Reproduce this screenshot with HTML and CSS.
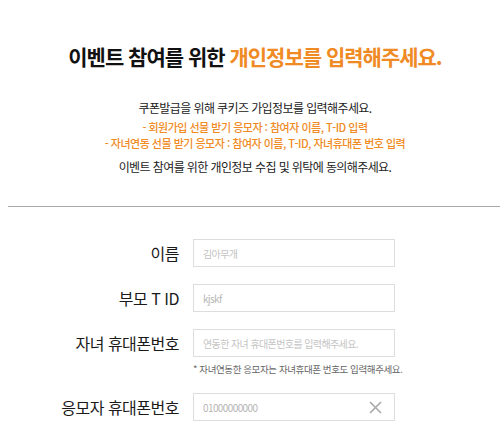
FILE: index.html
```html
<!DOCTYPE html>
<html lang="ko">
<head>
    <meta charset="UTF-8">
    <meta name="viewport" content="width=device-width, initial-scale=1.0">
    <title>이벤트 참여 개인정보 입력</title>
    <link rel="stylesheet" href="styles.css">
</head>
<body>
    <div class="intro">
        <h1>이벤트 참여를 위한 <span class="accent">개인정보를 입력해주세요.</span></h1>
        <p class="lead">쿠폰발급을 위해 쿠키즈 가입정보를 입력해주세요.</p>
        <p class="sub">- 회원가입 선물 받기 응모자 : 참여자 이름, T-ID 입력</p>
        <p class="sub">- 자녀연동 선물 받기 응모자 : 참여자 이름, T-ID, 자녀휴대폰 번호 입력</p>
        <p class="agree">이벤트 참여를 위한 개인정보 수집 및 위탁에 동의해주세요.</p>
    </div>

    <hr class="divider">

    <form class="info-form">
        <div class="field">
            <label for="name">이름</label>
            <div class="control">
                <input type="text" id="name" placeholder="김아무개">
            </div>
        </div>
        <div class="field">
            <label for="tid">부모 T ID</label>
            <div class="control">
                <input type="text" id="tid" value="kjskf">
            </div>
        </div>
        <div class="field">
            <label for="child">자녀 휴대폰번호</label>
            <div class="control">
                <input type="text" id="child" placeholder="연동한 자녀 휴대폰번호를 입력해주세요.">
                <p class="note">* 자녀연동한 응모자는 자녀휴대폰 번호도 입력해주세요.</p>
            </div>
        </div>
        <div class="field">
            <label for="phone">응모자 휴대폰번호</label>
            <div class="control">
                <input type="text" id="phone" value="01000000000">
                <button type="button" class="clear" aria-label="지우기">
                    <svg width="13" height="13" viewBox="0 0 13 13">
                        <path d="M1 1 L12 12 M12 1 L1 12" stroke="#a8a8a8" stroke-width="1.6" fill="none"/>
                    </svg>
                </button>
            </div>
        </div>
    </form>
</body>
</html>
```

FILE: styles.css
```css
/* Reset */
* {
    margin: 0;
    padding: 0;
    box-sizing: border-box;
}

body {
    font-family: "Noto Sans CJK KR", "Noto Sans", sans-serif;
    background: #fff;
    color: #222;
    width: 500px;
    overflow: hidden;
}

/* Intro text */
.intro {
    text-align: center;
    padding: 40px 0 0 10px;
}

h1 {
    font-size: 21px;
    font-weight: 700;
    letter-spacing: -1px;
    line-height: 32px;
    color: #111;
    margin-bottom: 27px;
}

.accent {
    color: #f08a24;
}

.lead {
    font-size: 12px;
    letter-spacing: -0.6px;
    line-height: 18px;
    color: #222;
    margin-bottom: 2px;
}

.sub {
    font-size: 11px;
    font-weight: 500;
    letter-spacing: -0.5px;
    line-height: 16px;
    color: #f08a24;
}

.agree {
    font-size: 12px;
    letter-spacing: -0.6px;
    line-height: 18px;
    color: #222;
    margin-top: 7px;
}

.divider {
    border: none;
    border-top: 1px solid #a8a8a8;
    margin: 30px 0 0 8px;
}

/* Form */
.info-form {
    padding-top: 32px;
}

.field {
    display: grid;
    grid-template-columns: 179px 202px;
    column-gap: 14px;
    align-items: start;
    margin-bottom: 17px;
}

.field label {
    text-align: right;
    font-size: 16px;
    letter-spacing: -0.5px;
    line-height: 28px;
    color: #1a1a1a;
}

.control {
    position: relative;
}

.control input {
    display: block;
    width: 202px;
    height: 28px;
    border: 1px solid #ddd;
    padding: 0 9px;
    font-family: "Noto Sans CJK KR", "Noto Sans", sans-serif;
    font-size: 10px;
    letter-spacing: -0.6px;
    color: #b5b5b5;
    outline: none;
}

.control input::placeholder {
    color: #c4c4c4;
}

.note {
    font-size: 9.5px;
    letter-spacing: -0.4px;
    color: #666;
    margin-top: 5px;
    line-height: 14px;
    white-space: nowrap;
}

.clear {
    position: absolute;
    right: 13px;
    top: 7px;
    border: none;
    background: none;
    width: 14px;
    height: 14px;
    display: flex;
    align-items: center;
    justify-content: center;
}
```
